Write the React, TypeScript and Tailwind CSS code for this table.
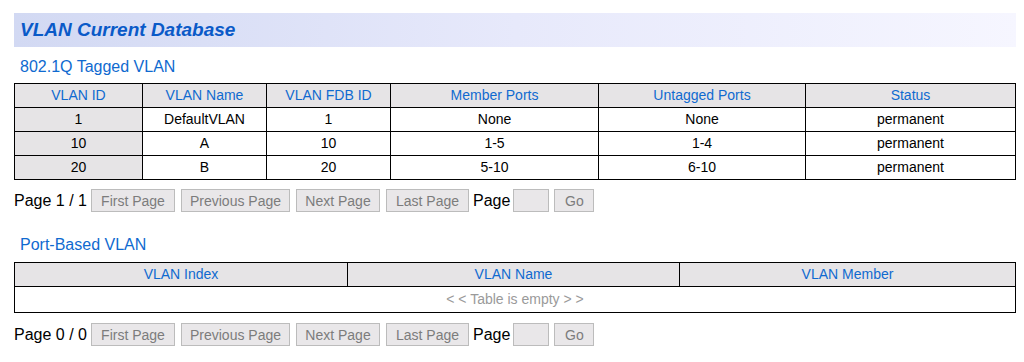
import React from "react";

const font = { fontFamily: '"Liberation Sans", Arial, sans-serif' };

const tagged = [
  { id: "1", name: "DefaultVLAN", fdb: "1", member: "None", untagged: "None", status: "permanent" },
  { id: "10", name: "A", fdb: "10", member: "1-5", untagged: "1-4", status: "permanent" },
  { id: "20", name: "B", fdb: "20", member: "5-10", untagged: "6-10", status: "permanent" },
];

const taggedCols = [
  { label: "VLAN ID", w: "w-[128px]" },
  { label: "VLAN Name", w: "w-[124px]" },
  { label: "VLAN FDB ID", w: "w-[124px]" },
  { label: "Member Ports", w: "w-[208px]" },
  { label: "Untagged Ports", w: "w-[207px]" },
  { label: "Status", w: "" },
];

const PageBtn = ({ label, w }: { label: string; w: string }) => (
  <button
    type="button"
    className={`${w} h-[23px] border border-[#bcbcbc] bg-[#e9e7e9] text-[14px] text-[#7c7c7c] leading-none`}
  >
    {label}
  </button>
);

const Pager = ({ page, total }: { page: number; total: number }) => (
  <div className="flex items-center h-[23px] text-[16px] text-black">
    <span className="w-[77px]">
      Page {page} / {total}
    </span>
    <div className="flex items-center gap-[6px]">
      <PageBtn label="First Page" w="w-[84px]" />
      <PageBtn label="Previous Page" w="w-[109px]" />
      <PageBtn label="Next Page" w="w-[84px]" />
      <PageBtn label="Last Page" w="w-[83px]" />
    </div>
    <span className="ml-[4px] mr-[3px]">Page</span>
    <input
      type="text"
      className="w-[36px] h-[23px] border border-[#bcbcbc] bg-[#e9e7e9] outline-none"
    />
    <div className="ml-[5px]">
      <PageBtn label="Go" w="w-[40px]" />
    </div>
  </div>
);

export default function App() {
  return (
    <div className="w-[1024px] h-[362px] bg-white overflow-hidden" style={font}>
      <div className="ml-[14px] w-[1002px] pt-[13px]">
        <div className="h-[34px] flex items-center pl-[6px] bg-gradient-to-r from-[#d2d9f3] via-[#e7e9fb] to-[#f6f6ff]">
          <h1 className="text-[19px] font-bold italic text-[#0a5ac8]">
            VLAN Current Database
          </h1>
        </div>

        <h2 className="mt-[10px] pl-[6px] h-[26px] text-[16px] text-[#0f6ad0] leading-[20px]">
          802.1Q Tagged VLAN
        </h2>
        <table className="w-full table-fixed border-collapse text-[14px]">
          <thead>
            <tr className="h-[24px] bg-[#e6e4e6]">
              {taggedCols.map((c) => (
                <th key={c.label} className={`${c.w} border border-black font-normal text-[#0f6ad0]`}>
                  {c.label}
                </th>
              ))}
            </tr>
          </thead>
          <tbody>
            {tagged.map((r) => (
              <tr key={r.id} className="h-[24px] text-black text-center">
                <td className="border border-black bg-[#e6e4e6]">{r.id}</td>
                <td className="border border-black">{r.name}</td>
                <td className="border border-black">{r.fdb}</td>
                <td className="border border-black">{r.member}</td>
                <td className="border border-black">{r.untagged}</td>
                <td className="border border-black">{r.status}</td>
              </tr>
            ))}
          </tbody>
        </table>
        <div className="mt-[9px]">
          <Pager page={1} total={1} />
        </div>

        <h2 className="mt-[23px] pl-[6px] h-[27px] text-[16px] text-[#0f6ad0] leading-[20px]">
          Port-Based VLAN
        </h2>
        <table className="w-full table-fixed border-collapse text-[14px]">
          <thead>
            <tr className="h-[24px] bg-[#e6e4e6]">
              <th className="w-[333px] border border-black font-normal text-[#0f6ad0]">VLAN Index</th>
              <th className="w-[332px] border border-black font-normal text-[#0f6ad0]">VLAN Name</th>
              <th className="border border-black font-normal text-[#0f6ad0]">VLAN Member</th>
            </tr>
          </thead>
          <tbody>
            <tr className="h-[26px]">
              <td colSpan={3} className="border border-black text-center text-[#9a9a9a]">
                &lt; &lt; Table is empty &gt; &gt;
              </td>
            </tr>
          </tbody>
        </table>
        <div className="mt-[10px]">
          <Pager page={0} total={0} />
        </div>
      </div>
    </div>
  );
}
